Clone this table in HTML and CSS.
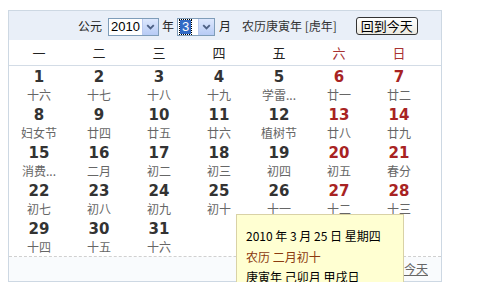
FILE: index.html
```html
<!DOCTYPE html>
<html lang="zh-CN">
<head>
<meta charset="utf-8">
<title>万年历</title>
<link rel="stylesheet" href="styles.css">
</head>
<body>
<div class="cal">
  <div class="hd">
    <span class="lbl">公元</span>
    <div class="sel sel-year"><span class="val">2010</span><span class="arr"><svg width="16" height="16" viewBox="0 0 16 16"><path d="M4.5 6 L8 9.5 L11.5 6" fill="none" stroke="#4d6185" stroke-width="2"/></svg></span></div>
    <span class="lbl lbl-y">年</span>
    <div class="sel sel-month"><span class="val"><span class="hl">3</span></span><span class="arr"><svg width="16" height="16" viewBox="0 0 16 16"><path d="M4.5 6 L8 9.5 L11.5 6" fill="none" stroke="#4d6185" stroke-width="2"/></svg></span></div>
    <span class="lbl lbl-m">月</span>
    <span class="lunar-year">农历庚寅年 [虎年]</span>
    <button class="today-btn">回到今天</button>
  </div>
  <div class="week">
    <span>一</span><span>二</span><span>三</span><span>四</span><span>五</span><span class="we">六</span><span class="we">日</span>
  </div>
  <div class="days">
    <div class="d"><b>1</b><i>十六</i></div>
    <div class="d"><b>2</b><i>十七</i></div>
    <div class="d"><b>3</b><i>十八</i></div>
    <div class="d"><b>4</b><i>十九</i></div>
    <div class="d"><b>5</b><i>学雷...</i></div>
    <div class="d we"><b>6</b><i>廿一</i></div>
    <div class="d we"><b>7</b><i>廿二</i></div>
    <div class="d"><b>8</b><i>妇女节</i></div>
    <div class="d"><b>9</b><i>廿四</i></div>
    <div class="d"><b>10</b><i>廿五</i></div>
    <div class="d"><b>11</b><i>廿六</i></div>
    <div class="d"><b>12</b><i>植树节</i></div>
    <div class="d we"><b>13</b><i>廿八</i></div>
    <div class="d we"><b>14</b><i>廿九</i></div>
    <div class="d"><b>15</b><i>消费...</i></div>
    <div class="d"><b>16</b><i>二月</i></div>
    <div class="d"><b>17</b><i>初二</i></div>
    <div class="d"><b>18</b><i>初三</i></div>
    <div class="d"><b>19</b><i>初四</i></div>
    <div class="d we"><b>20</b><i>初五</i></div>
    <div class="d we"><b>21</b><i>春分</i></div>
    <div class="d"><b>22</b><i>初七</i></div>
    <div class="d"><b>23</b><i>初八</i></div>
    <div class="d"><b>24</b><i>初九</i></div>
    <div class="d"><b>25</b><i>初十</i></div>
    <div class="d"><b>26</b><i>十一</i></div>
    <div class="d we"><b>27</b><i>十二</i></div>
    <div class="d we"><b>28</b><i>十三</i></div>
    <div class="d"><b>29</b><i>十四</i></div>
    <div class="d"><b>30</b><i>十五</i></div>
    <div class="d"><b>31</b><i>十六</i></div>
    <div class="d"></div>
    <div class="d"></div>
    <div class="d"></div>
    <div class="d"></div>
  </div>
  <div class="ft"><a href="#" class="ft-link">今天</a></div>
  <div class="tip">
    <div class="tip-line">2010 年 3 月 25 日 星期四</div>
    <div class="tip-line tip-lunar">农历 二月初十</div>
    <div class="tip-line">庚寅年 己卯月 甲戌日</div>
  </div>
</div>
</body>
</html>
```

FILE: styles.css
```css
html, body {
  margin: 0;
  padding: 0;
  overflow: hidden;
  background: #fff;
}
body {
  font-family: "Noto Sans CJK SC", "DejaVu Sans", sans-serif;
  font-size: 12px;
  color: #333;
}
.cal {
  position: relative;
  margin: 10px 0 0 8px;
  width: 432px;
  border: 1px solid #cdd8e3;
  background: #fff;
}
.hd {
  height: 29px;
  background: #e9eff8;
  display: flex;
  align-items: center;
  padding-left: 69px;
}
.lbl {
  line-height: 18px;
  color: #222;
}
.sel {
  height: 16px;
  border: 1px solid #7f9db9;
  background: #fff;
  display: flex;
  align-items: center;
  margin-top: 2px;
}
.sel-year {
  width: 49px;
  margin-left: 6px;
}
.sel-month {
  width: 36px;
  margin-left: 3px;
}
.val {
  flex: 1;
  font-family: "Liberation Sans", sans-serif;
  font-size: 13px;
  line-height: 16px;
  color: #000;
  padding-left: 2px;
}
.hl {
  display: inline-block;
  background: #316ac5;
  color: #fff;
  outline: 1px dotted #000;
  padding: 0 2px;
  line-height: 14px;
  margin-top: 1px;
}
.arr {
  width: 16px;
  height: 16px;
  background: linear-gradient(#dde8fd, #b7cbf5);
  border-left: 1px solid #b9c9ef;
  box-sizing: border-box;
  display: flex;
}
.lbl-y {
  margin-left: 3px;
}
.lbl-m {
  margin-left: 4px;
}
.lunar-year {
  margin-left: 11px;
  line-height: 18px;
  color: #333;
}
.today-btn {
  margin-left: 19px;
  width: 62px;
  height: 18px;
  padding: 0;
  font-family: "Noto Sans CJK SC", sans-serif;
  font-size: 13px;
  line-height: 14px;
  color: #000;
  border: 1px solid #333;
  border-radius: 3px;
  background: linear-gradient(#ffffff, #ece9e0);
}
.week {
  display: grid;
  grid-template-columns: repeat(7, 60px);
  height: 25px;
  border-bottom: 1px solid #d3dce6;
}
.week span {
  text-align: center;
  line-height: 25px;
  font-size: 13px;
  color: #222;
}
.week .we {
  color: #a83232;
}
.days {
  display: grid;
  grid-template-columns: repeat(7, 60px);
  grid-auto-rows: 38px;
  border-bottom: 1px dashed #d0d0d0;
}
.d {
  display: flex;
  flex-direction: column;
  align-items: center;
  padding-top: 2px;
}
.d b {
  font-family: "DejaVu Sans", "Liberation Sans", sans-serif;
  font-weight: bold;
  font-size: 15px;
  line-height: 18px;
  color: #333;
}
.d i {
  font-style: normal;
  font-size: 12px;
  line-height: 18px;
  color: #666;
}
.d.we b {
  color: #a82323;
}
.ft {
  height: 24px;
  background: #f9fbfd;
  display: flex;
  justify-content: flex-end;
  align-items: center;
  padding-right: 13px;
}
.ft-link {
  color: #666;
  font-size: 12px;
  line-height: 16px;
}
.tip {
  position: absolute;
  left: 227px;
  top: 203px;
  width: 168px;
  height: 86px;
  background: #ffffd2;
  border: 1px solid #d9d2a6;
  padding: 11px 0 0 9px;
  box-sizing: border-box;
}
.tip-line {
  line-height: 20.5px;
  font-size: 12px;
  color: #000;
}
.tip-lunar {
  color: #8b3a0f;
}
```
